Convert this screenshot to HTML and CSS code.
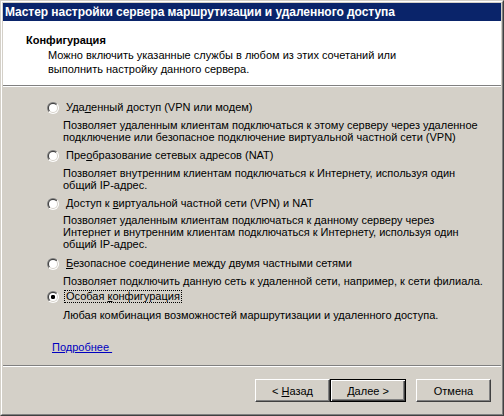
FILE: index.html
```html
<!DOCTYPE html>
<html lang="ru">
<head>
<meta charset="utf-8">
<title>Мастер настройки сервера маршрутизации и удаленного доступа</title>
<link rel="stylesheet" href="styles.css">
</head>
<body>
<div class="window">
  <div class="frame">
    <div class="titlebar">Мастер настройки сервера маршрутизации и удаленного доступа</div>
    <div class="header">
      <div class="h-title">Конфигурация</div>
      <div class="h-desc">Можно включить указанные службы в любом из этих сочетаний или<br>выполнить настройку данного сервера.</div>
    </div>
    <div class="sep"></div>
    <div class="content">
      <div class="option o1">
        <span class="radio"></span>
        <span class="label">Уда<u>л</u>енный доступ (VPN или модем)</span>
      </div>
      <div class="desc d1">Позволяет удаленным клиентам подключаться к этому серверу через удаленное<br>подключение или безопасное подключение виртуальной частной сети (VPN)</div>
      <div class="option o2">
        <span class="radio"></span>
        <span class="label">Пре<u>о</u>бразование сетевых адресов (NAT)</span>
      </div>
      <div class="desc d2">Позволяет внутренним клиентам подключаться к Интернету, используя один<br>общий IP-адрес.</div>
      <div class="option o3">
        <span class="radio"></span>
        <span class="label">Доступ к <u>в</u>иртуальной частной сети (VPN) и NAT</span>
      </div>
      <div class="desc d3">Позволяет удаленным клиентам подключаться к данному серверу через<br>Интернет и внутренним клиентам подключаться к Интернету, используя один<br>общий IP-адрес.</div>
      <div class="option o4">
        <span class="radio"></span>
        <span class="label"><u>Б</u>езопасное соединение между двумя частными сетями</span>
      </div>
      <div class="desc d4">Позволяет подключить данную сеть к удаленной сети, например, к сети филиала.</div>
      <div class="option o5">
        <span class="radio checked"></span>
        <span class="label focus">Особая <u>к</u>онфигурация</span>
      </div>
      <div class="desc d5">Любая комбинация возможностей маршрутизации и удаленного доступа.</div>
      <div class="more"><a href="#" class="link">Подробнее </a></div>
    </div>
    <div class="sep2"></div>
    <div class="buttons">
      <button class="btn">&lt; <u>Н</u>азад</button>
      <button class="btn default"><u>Д</u>алее &gt;</button>
      <button class="btn cancel">Отмена</button>
    </div>
  </div>
</div>
</body>
</html>
```
FILE: styles.css
```css
html, body {
  margin: 0;
  padding: 0;
}
body {
  width: 504px;
  height: 416px;
  overflow: hidden;
  background: #d4d0c8;
  font-family: "Liberation Sans", Arial, sans-serif;
  font-size: 11px;
  color: #000;
}
.window {
  width: 504px;
  height: 416px;
  box-sizing: border-box;
  border: 1px solid;
  border-color: #d4d0c8 #404040 #404040 #d4d0c8;
}
.frame {
  height: 100%;
  box-sizing: border-box;
  border: 1px solid;
  border-color: #ffffff #808080 #808080 #ffffff;
  padding: 1px 1px 0 1px;
  background: #d4d0c8;
  display: flex;
  flex-direction: column;
}
.titlebar {
  height: 18px;
  line-height: 18px;
  background: #0a246a;
  color: #fff;
  font-weight: bold;
  font-size: 12px;
  letter-spacing: -0.05px;
  padding-left: 2px;
  white-space: nowrap;
}
.header {
  background: #fff;
  height: 64px;
  box-sizing: border-box;
  padding-top: 13px;
}
.h-title {
  font-weight: bold;
  margin-left: 23px;
  line-height: 13px;
}
.h-desc {
  margin-left: 45px;
  margin-top: 1px;
  line-height: 14px;
}
.sep {
  height: 1px;
  background: #808080;
  border-bottom: 1px solid #fff;
}
.content {
  flex: 1;
  padding-left: 43px;
}
.option {
  display: flex;
  align-items: center;
  height: 13px;
  line-height: 13px;
  white-space: nowrap;
}
.radio {
  position: relative;
  width: 12px;
  height: 12px;
  border-radius: 50%;
  background: linear-gradient(135deg, #808080 50%, #ffffff 50%);
  flex: none;
  margin-left: 1px;
}
.radio::before {
  content: "";
  position: absolute;
  inset: 1px;
  border-radius: 50%;
  background: linear-gradient(135deg, #404040 50%, #d4d0c8 50%);
}
.radio::after {
  content: "";
  position: absolute;
  inset: 2px;
  border-radius: 50%;
  background: #fff;
}
.radio.checked::after {
  background: radial-gradient(circle, #000 0, #000 2px, #fff 2.3px);
}
.label {
  margin-left: 5px;
  padding: 0 1px;
  border: 1px solid transparent;
}
.label.focus {
  border: 1px dotted #000;
  line-height: 11px;
}
u {
  text-decoration: underline;
  text-underline-offset: 1px;
}
.desc {
  margin-left: 17px;
  line-height: 12px;
  white-space: nowrap;
}
.o1 { margin-top: 14px; }
.d1 { margin-top: 5px; }
.o2 { margin-top: 6px; }
.d2 { margin-top: 5px; }
.o3 { margin-top: 6px; }
.d3 { margin-top: 4px; }
.o4 { margin-top: 7px; }
.d4 { margin-top: 5px; }
.o5 { margin-top: 3px; }
.d5 { margin-top: 6px; }
.more {
  margin-top: 20px;
  margin-left: 6px;
  line-height: 13px;
}
.link {
  color: #0000c0;
  text-decoration: underline;
  white-space: pre;
}
.sep2 {
  height: 1px;
  background: #808080;
  border-bottom: 1px solid #fff;
}
.buttons {
  height: 47px;
  display: flex;
  align-items: flex-start;
  padding-top: 12px;
  padding-left: 252px;
  box-sizing: border-box;
}
.btn {
  width: 75px;
  height: 23px;
  box-sizing: border-box;
  padding: 0;
  margin: 0;
  font: inherit;
  background: #d4d0c8;
  color: #000;
  border: 1px solid;
  border-color: #ffffff #404040 #404040 #ffffff;
  box-shadow: inset -1px -1px 0 #808080;
}
.btn.default {
  border: 1px solid #000;
  box-shadow: inset 1px 1px 0 #fff, inset -1px -1px 0 #404040, inset -2px -2px 0 #808080;
  width: 76px;
}
.btn.cancel {
  margin-left: 10px;
}
```
